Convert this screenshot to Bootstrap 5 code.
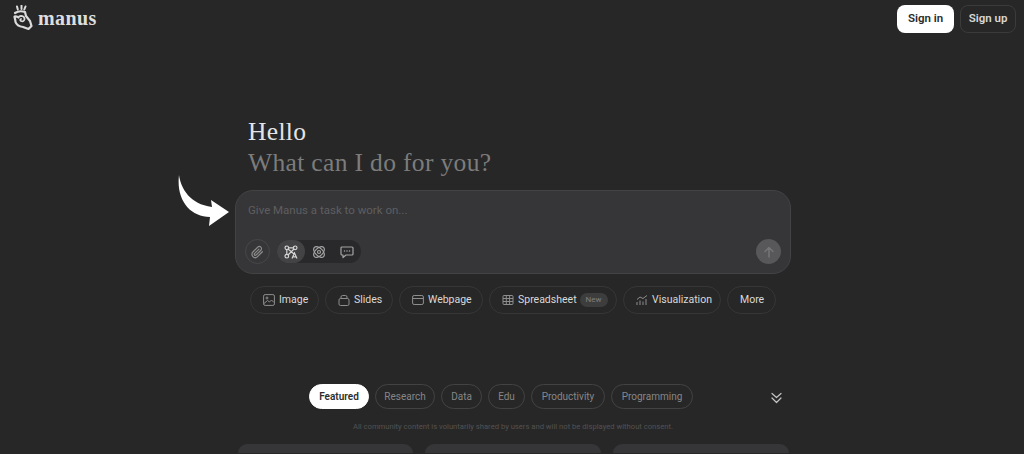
<!DOCTYPE html>
<html lang="en">
<head>
<meta charset="utf-8">
<title>Manus</title>
<link href="https://cdn.jsdelivr.net/npm/bootstrap@5.3.0/dist/css/bootstrap.min.css" rel="stylesheet">
<style>
html,body{height:454px;overflow:hidden;background:#272727;font-family:"Roboto","Liberation Sans",sans-serif;}
.top-bar{height:33px;padding:0 8px 0 12px;}
.logo-word{font-family:"Liberation Serif",serif;font-weight:700;font-size:20px;color:#dedede;letter-spacing:.4px;line-height:1;margin-left:4px;margin-top:8px;}
.logo-mark{width:22px;height:26px;margin-top:5px;}
.btn-in,.btn-up{height:28px;border-radius:8px;font-size:11.5px;font-weight:600;display:flex;align-items:center;justify-content:center;margin-top:5px;}
.btn-in{width:57px;background:#fff;color:#2b2b2b;}
.btn-up{width:56px;border:1px solid #3b3b3b;color:#d8d8d8;}
.act-gap{gap:6px;}
.stage{width:556px;margin:0 0 0 235px;position:relative;}
.hero{font-family:"Liberation Serif",serif;font-size:25.5px;line-height:31px;padding:83px 0 0 13px;letter-spacing:.35px;}
.hero-a{color:#e4e4e4;}
.hero-b{color:#7c7c7c;}
.arrow-over{position:absolute;left:-57px;top:142px;width:52px;height:52px;}
.composer{height:84px;margin-top:12px;background:#363638;border:1px solid #434345;border-radius:18px;padding:11px 9px 9px 9px;}
.ghost{color:#5e5e60;font-size:11.500px;line-height:16px;padding-left:3px;}
.clip{width:25px;height:25px;border:1px solid #47474a;border-radius:50%;color:#8d8d8d;}
.modes{height:23px;background:#29292b;border-radius:12px;margin-left:7px;}
.mode-i{width:28px;height:23px;border-radius:12px;color:#a4a4a4;}
.mode-on{background:#434345;color:#d6d6d6;}
.send{width:25px;height:25px;border-radius:50%;background:#58585a;color:#757577;}
.chips{gap:6px;margin-top:12px;padding-left:15px;}
.chip{height:28px;border:1px solid #363636;border-radius:14px;color:#d9d9d9;font-size:10.500px;font-weight:400;padding:0 0 0 12px;gap:4px;white-space:nowrap;flex:none;}
.chip svg{color:#8e8e8e;flex:none;}
.w69{width:69px}.w68{width:68px}.w84{width:84px}.w128{width:128px}.w98{width:98px}.w49{width:49px}
.tag-new{height:14px;padding:0 6px;border-radius:7px;background:#3d3d3d;color:#7f7f7f;font-size:8px;line-height:14px;margin-left:-1px;}
.cats{gap:6px;margin-top:70px;padding-left:74px;position:relative;}
.cat{height:25px;border:1px solid #434343;border-radius:13px;color:#868686;font-size:10px;white-space:nowrap;flex:none;}
.w60{width:60px}.w41{width:41px}.w37{width:37px}.w74{width:74px}.w82{width:82px}
.cat-on{background:#fff;border-color:#fff;color:#2d2d2d;font-weight:600;}
.chev{position:absolute;left:536px;top:8px;color:#c4c4c4;}
.note{color:#525252;font-size:7.650px;text-align:center;margin-top:12px;line-height:12px;}
.tiles{gap:12px;margin-top:11px;padding-left:3px;}
.tile{height:9px;background:#363638;border-radius:10px 10px 0 0;flex:none;}
.t1{width:175px}.t2{width:176px}.t3{width:176px}
</style>
</head>
<body>
<header class="top-bar d-flex justify-content-between align-items-start">
  <div class="d-flex align-items-start">
    <svg class="logo-mark" viewBox="0 0 22 26" fill="none" stroke="#dcdcdc" stroke-linecap="round" stroke-linejoin="round">
      <path d="M5 1.500l.8 3M9.500 .8v3.200M13.500 1.500l-1.200 3" stroke-width="2"/>
      <path d="M3 8c3-2 7-2 10-1l1 4 4 5 1.500 5-3 3-5.500-2c-4-.5-6.500-2-7.500-5 0-2-1-4.500-1-5.500 1.500-.5 3 0 4 1" stroke-width="2.200"/>
      <path d="M7 11.500c2-1 5-.5 5.500 2 .3 2-1.500 3.500-3.500 2.500-1-.5-1-1.500 0-2" stroke-width="1.800"/>
    </svg>
    <span class="logo-word">manus</span>
  </div>
  <div class="d-flex act-gap">
    <a class="btn-in text-decoration-none">Sign in</a>
    <a class="btn-up text-decoration-none">Sign up</a>
  </div>
</header>
<main class="stage">
  <svg class="arrow-over" viewBox="0 0 52 52"><path d="M1 0C3 14 12 29 34 32L33 25 51 37 31 51 32 42C12 42-2 25 1 0Z" fill="#fff"/></svg>
  <div class="hero"><div class="hero-a">Hello</div><div class="hero-b">What can I do for you?</div></div>
  <section class="composer d-flex flex-column justify-content-between">
    <div class="ghost">Give Manus a task to work on...</div>
    <div class="d-flex align-items-center justify-content-between">
      <div class="d-flex align-items-center">
        <div class="clip d-flex align-items-center justify-content-center">
          <svg width="13" height="14" viewBox="0 0 24 24" fill="none" stroke="currentColor" stroke-width="2.200" stroke-linecap="round" stroke-linejoin="round"><path d="M21 11.500l-9 9a6 6 0 0 1-8.500-8.500l9-9a4 4 0 0 1 5.700 5.700l-9 9a2 2 0 0 1-2.800-2.800l8.300-8.300"/></svg>
        </div>
        <div class="modes d-flex">
          <div class="mode-i mode-on d-flex align-items-center justify-content-center">
            <svg width="14" height="14" viewBox="0 0 14 14" fill="none" stroke="currentColor" stroke-width="1.200"><circle cx="2.800" cy="2.800" r="1.800"/><circle cx="11.200" cy="2.800" r="1.800"/><circle cx="2.800" cy="11.200" r="1.800"/><path d="M4.600 2.800h4.800M2.800 4.600v4.800M4 4l6 5M10 4L4 10M8 13.500l2.500-5.500 2.500 5.500M9 11.800h3"/></svg>
          </div>
          <div class="mode-i d-flex align-items-center justify-content-center">
            <svg width="14" height="14" viewBox="0 0 14 14" fill="none" stroke="currentColor" stroke-width="1.200"><ellipse cx="7" cy="7" rx="6.500" ry="3.800" transform="rotate(45 7 7)"/><ellipse cx="7" cy="7" rx="6.500" ry="3.800" transform="rotate(-45 7 7)"/><circle cx="7" cy="7" r="1.500"/></svg>
          </div>
          <div class="mode-i d-flex align-items-center justify-content-center">
            <svg width="14" height="14" viewBox="0 0 14 14" fill="none" stroke="currentColor" stroke-width="1.200" stroke-linejoin="round"><path d="M2 2h10a1 1 0 0 1 1 1v6a1 1 0 0 1-1 1H6l-3 2.500V10H2a1 1 0 0 1-1-1V3a1 1 0 0 1 1-1z"/><path d="M4.500 6h.01M7 6h.01M9.500 6h.01" stroke-linecap="round" stroke-width="1.500"/></svg>
          </div>
        </div>
      </div>
      <div class="send d-flex align-items-center justify-content-center">
        <svg width="12" height="12" viewBox="0 0 12 12" fill="none" stroke="currentColor" stroke-width="1.500" stroke-linecap="round" stroke-linejoin="round"><path d="M6 11V1.500M2 5.500l4-4 4 4"/></svg>
      </div>
    </div>
  </section>
  <nav class="chips d-flex">
    <div class="chip w69 d-flex align-items-center">
      <svg width="12" height="12" viewBox="0 0 12 12" fill="none" stroke="currentColor"><rect x=".6" y=".6" width="10.800" height="10.800" rx="1.500"/><circle cx="4" cy="4" r="1"/><path d="M1 9.500l3.500-3 2 1.500 2-2 2.500 2.500"/></svg>Image</div>
    <div class="chip w68 d-flex align-items-center">
      <svg width="12" height="12" viewBox="0 0 12 12" fill="none" stroke="currentColor"><rect x="1" y="4.500" width="10" height="7" rx="1.500"/><path d="M3 4.500V3a1.500 1.500 0 0 1 1.500-1.500h3A1.500 1.500 0 0 1 9 3v1.500"/></svg>Slides</div>
    <div class="chip w84 d-flex align-items-center">
      <svg width="12" height="12" viewBox="0 0 12 12" fill="none" stroke="currentColor"><rect x=".6" y="1.500" width="10.800" height="9" rx="1.500"/><path d="M.6 4.500h10.800"/></svg>Webpage</div>
    <div class="chip w128 d-flex align-items-center">
      <svg width="12" height="12" viewBox="0 0 12 12" fill="none" stroke="currentColor"><rect x="1" y="1.500" width="10" height="9" rx="1"/><path d="M1 4.500h10M1 7.500h10M4.300 1.500v9M7.600 1.500v9"/></svg>Spreadsheet<span class="tag-new">New</span></div>
    <div class="chip w98 d-flex align-items-center">
      <svg width="12" height="12" viewBox="0 0 12 12" fill="none" stroke="currentColor"><path d="M1 11V8M4 11V6.500M7 11V7.500M10 11V5M1 5.500l3-2.500 3 1.500 4-3"/></svg>Visualization</div>
    <div class="chip w49 d-flex align-items-center">More</div>
  </nav>
  <nav class="cats d-flex">
    <div class="cat cat-on w60 d-flex align-items-center justify-content-center">Featured</div>
    <div class="cat w60 d-flex align-items-center justify-content-center">Research</div>
    <div class="cat w41 d-flex align-items-center justify-content-center">Data</div>
    <div class="cat w37 d-flex align-items-center justify-content-center">Edu</div>
    <div class="cat w74 d-flex align-items-center justify-content-center">Productivity</div>
    <div class="cat w82 d-flex align-items-center justify-content-center">Programming</div>
    <svg class="chev" width="11" height="12" viewBox="0 0 11 12" fill="none" stroke="currentColor" stroke-width="1.200" stroke-linecap="round" stroke-linejoin="round"><path d="M1 1.500l4.500 4 4.500-4M1 6l4.500 4.500L10 6"/></svg>
  </nav>
  <p class="note mb-0">All community content is voluntarily shared by users and will not be displayed without consent.</p>
  <div class="tiles d-flex">
    <div class="tile t1"></div><div class="tile t2"></div><div class="tile t3"></div>
  </div>
</main>
</body>
</html>
